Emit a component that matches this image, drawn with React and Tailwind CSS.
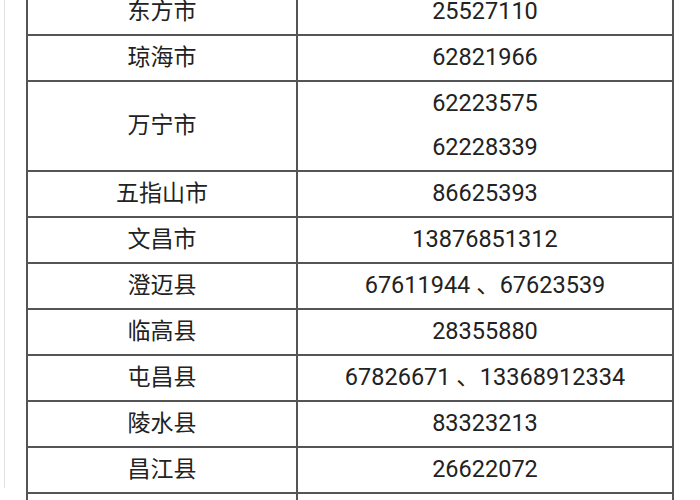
const rows = [
  { name: "东方市", phones: ["25527110"] },
  { name: "琼海市", phones: ["62821966"] },
  { name: "万宁市", phones: ["62223575", "62228339"] },
  { name: "五指山市", phones: ["86625393"] },
  { name: "文昌市", phones: ["13876851312"] },
  { name: "澄迈县", phones: ["67611944 、67623539"] },
  { name: "临高县", phones: ["28355880"] },
  { name: "屯昌县", phones: ["67826671 、13368912334"] },
  { name: "陵水县", phones: ["83323213"] },
  { name: "昌江县", phones: ["26622072"] },
  { name: "", phones: [""] },
];

export default function App() {
  return (
    <div
      className="h-[500px] w-[700px] overflow-hidden bg-white text-[#222] text-[23.5px]"
      style={{ fontFamily: 'Roboto, "Noto Sans CJK SC", sans-serif' }}
    >
      <div className="ml-[4px] h-full border-l border-[#e2e2e2] pl-[21px]">
        <div className="-mt-[12px] w-[648px] border-x-2 border-t-2 border-[#555]">
          {rows.map((row, i) => (
            <div key={i} className="flex border-b-2 border-[#555]">
              <div className="flex w-[270px] shrink-0 items-center justify-center border-r-2 border-[#555] text-[23px]">
                {row.name}
              </div>
              <div className="flex-1">
                {row.phones.map((p, j) => (
                  <div key={j} className="flex h-[44px] items-center justify-center whitespace-pre">
                    {p}
                  </div>
                ))}
              </div>
            </div>
          ))}
        </div>
      </div>
    </div>
  );
}
